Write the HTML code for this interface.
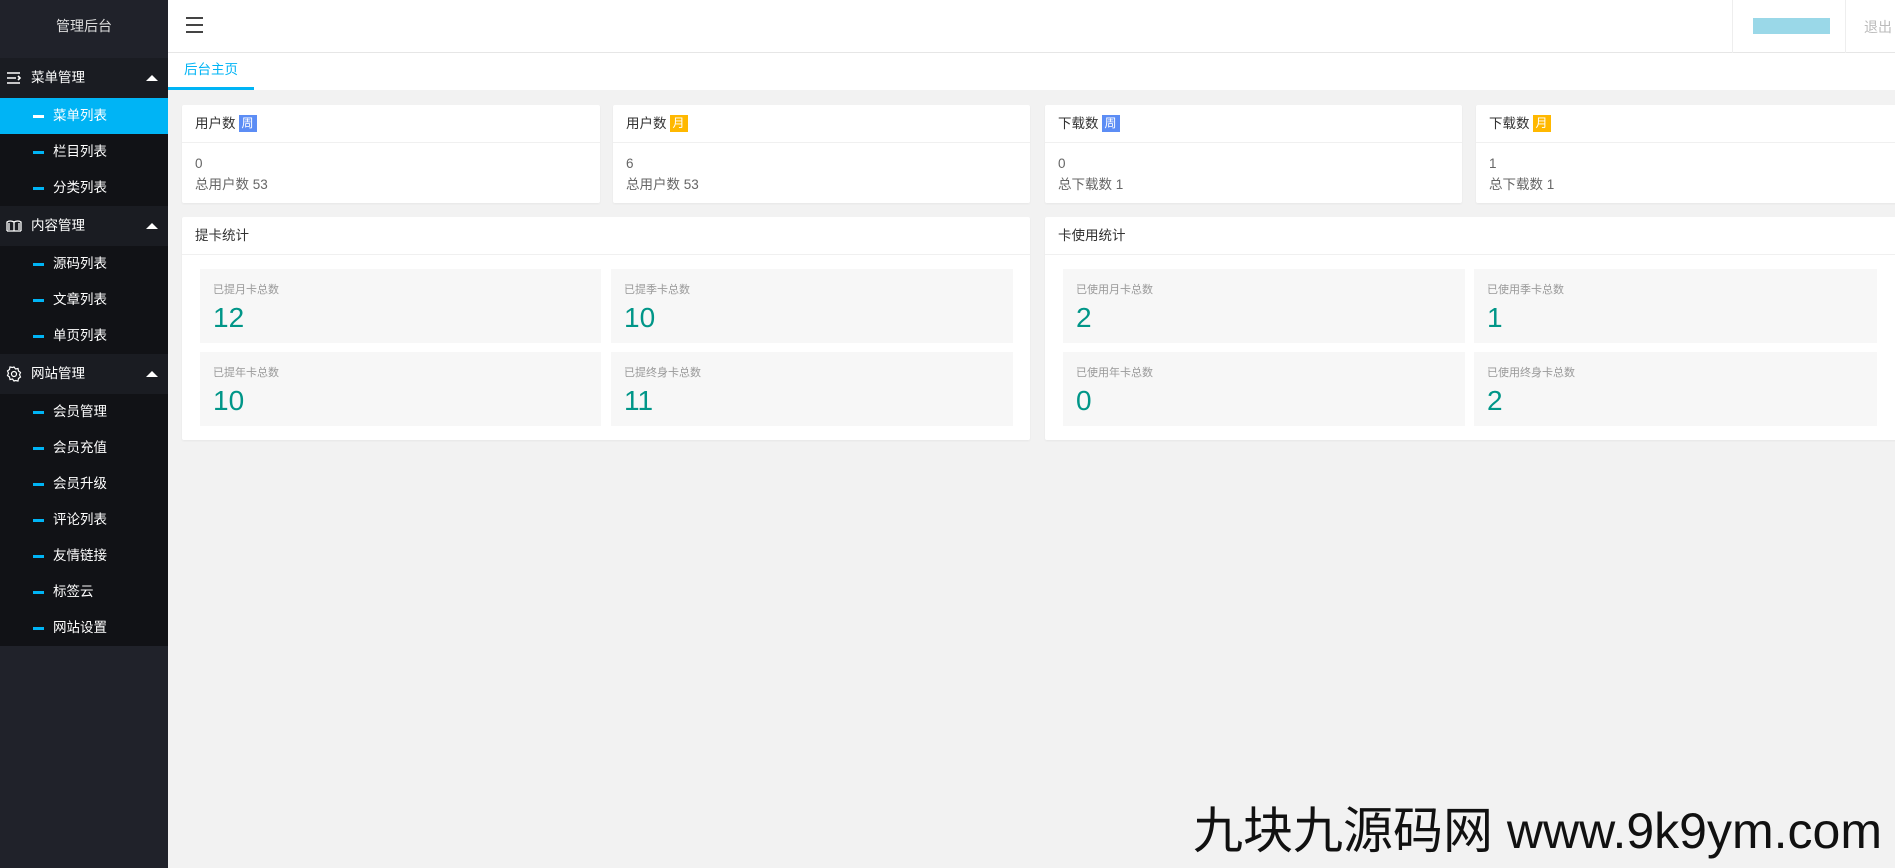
<!DOCTYPE html>
<html><head><meta charset="utf-8"><style>
*{margin:0;padding:0;box-sizing:border-box}
body{width:1895px;height:868px;background:#f2f2f2;font-family:"Liberation Sans","Noto Sans CJK SC",sans-serif;position:relative;overflow:hidden;font-size:14px;color:#333}
.side{position:absolute;left:0;top:0;width:168px;height:868px;background:#20222a}
.logo{height:58px;line-height:52px;text-align:center;color:#ddd;font-size:14px}
.grp{height:40px;background:#1a1c22;color:#fff;position:relative;line-height:40px;padding-left:31px;font-size:13.5px}
.grp .ic{position:absolute;left:6px;top:13px;width:16px;height:14px}
.grp .tri{position:absolute;right:10px;top:17px;width:0;height:0;border-left:6px solid transparent;border-right:6px solid transparent;border-bottom:6px solid #fff}
.sub{height:36px;line-height:36px;background:#111216;color:#fff;padding-left:53px;position:relative;font-size:13.5px}
.sub:before{content:"";position:absolute;left:33px;top:17px;width:11px;height:3px;background:#00b4f5}
.sub.on{background:#00b4f5}
.sub.on:before{background:#fff}
.top{position:absolute;left:168px;top:0;right:0;height:53px;background:#fff;border-bottom:1px solid #e6e6e6}
.tabs{position:absolute;left:168px;top:53px;right:0;height:37px;background:#fff}
.tab{position:absolute;left:0;top:0;width:86px;height:37px;line-height:34px;text-align:center;color:#00b4f5;font-size:13.5px;border-bottom:3px solid #00b4f5}
.card{position:absolute;background:#fff;border-radius:2px;box-shadow:0 1px 2px rgba(0,0,0,.05)}
.ch{height:38px;line-height:38px;padding-left:13px;border-bottom:1px solid #f0f0f0;font-size:13.5px;color:#333}
.badge{display:inline-block;color:#fff;font-size:12px;line-height:17px;padding:0 3px;margin-left:3px;vertical-align:1px}
.b1{background:#5c8df5}.b2{background:#ffb800}
.cb{padding:10px 13px;color:#666;font-size:13.5px;line-height:21px}
.box{position:absolute;background:#f7f7f7;height:74px}
.box .l{position:absolute;left:13px;top:12px;font-size:11px;color:#999}
.box .n{position:absolute;left:13px;top:34px;font-size:28px;color:#009688;line-height:30px}
</style></head><body>
<div class="side">
<div class="logo">管理后台</div>
<div class="grp"><svg class="ic" viewBox="0 0 16 14"><path d="M1 2h13M1 7h9M1 12h13M12 5l2 2-2 2" stroke="#fff" stroke-width="1.6" fill="none"/></svg>菜单管理<span class="tri"></span></div>
<div class="sub on">菜单列表</div><div class="sub">栏目列表</div><div class="sub">分类列表</div>
<div class="grp"><svg class="ic" viewBox="0 0 16 14"><path d="M1 12V3q3-2 7 0q4-2 7 0v9M8 3v9M1 12h14M3 11V4M13 11V4" stroke="#fff" stroke-width="1.3" fill="none"/></svg>内容管理<span class="tri"></span></div>
<div class="sub">源码列表</div><div class="sub">文章列表</div><div class="sub">单页列表</div>
<div class="grp"><svg class="ic" viewBox="0 0 16 16" style="height:16px;top:12px"><circle cx="8" cy="8" r="2.5" stroke="#fff" fill="none" stroke-width="1.2"/><path d="M8 1l1.5 2 2.5-.5.5 2.5 2 1.5-1 2.3 1 2.2-2 1.5-.5 2.5-2.5-.5L8 15l-1.5-2-2.5.5-.5-2.5-2-1.5 1-2.2-1-2.3 2-1.5.5-2.5 2.5.5z" stroke="#fff" fill="none" stroke-width="1.2"/></svg>网站管理<span class="tri"></span></div>
<div class="sub">会员管理</div><div class="sub">会员充值</div><div class="sub">会员升级</div><div class="sub">评论列表</div><div class="sub">友情链接</div><div class="sub">标签云</div><div class="sub">网站设置</div>
</div>
<div class="top">
<div style="position:absolute;left:18px;top:17px;width:17px"><div style="height:2px;background:#444;margin-bottom:5px"></div><div style="height:2px;background:#444;margin-bottom:5px"></div><div style="height:2px;background:#444"></div></div>
<div style="position:absolute;left:1564px;top:0;width:1px;height:53px;background:#eee"></div>
<div style="position:absolute;left:1585px;top:18px;width:77px;height:16px;background:#9ad8e8"></div>
<div style="position:absolute;left:1677px;top:0;width:1px;height:53px;background:#eee"></div>
<div style="position:absolute;left:1696px;top:17px;color:#bbb;font-size:14px">退出</div>
</div>
<div class="tabs"><div class="tab">后台主页</div></div>

<div class="card" style="left:182px;top:105px;width:418px;height:98px"><div class="ch">用户数<span class="badge b1">周</span></div><div class="cb">0<br>总用户数 53</div></div>
<div class="card" style="left:613px;top:105px;width:417px;height:98px"><div class="ch">用户数<span class="badge b2">月</span></div><div class="cb">6<br>总用户数 53</div></div>
<div class="card" style="left:1045px;top:105px;width:417px;height:98px"><div class="ch">下载数<span class="badge b1">周</span></div><div class="cb">0<br>总下载数 1</div></div>
<div class="card" style="left:1476px;top:105px;width:430px;height:98px"><div class="ch">下载数<span class="badge b2">月</span></div><div class="cb">1<br>总下载数 1</div></div>

<div class="card" style="left:182px;top:217px;width:848px;height:223px"><div class="ch">提卡统计</div></div>
<div class="box" style="left:200px;top:269px;width:401px"><span class="l">已提月卡总数</span><span class="n">12</span></div>
<div class="box" style="left:611px;top:269px;width:402px"><span class="l">已提季卡总数</span><span class="n">10</span></div>
<div class="box" style="left:200px;top:352px;width:401px"><span class="l">已提年卡总数</span><span class="n">10</span></div>
<div class="box" style="left:611px;top:352px;width:402px"><span class="l">已提终身卡总数</span><span class="n">11</span></div>

<div class="card" style="left:1045px;top:217px;width:870px;height:223px"><div class="ch">卡使用统计</div></div>
<div class="box" style="left:1063px;top:269px;width:402px"><span class="l">已使用月卡总数</span><span class="n">2</span></div>
<div class="box" style="left:1474px;top:269px;width:403px"><span class="l">已使用季卡总数</span><span class="n">1</span></div>
<div class="box" style="left:1063px;top:352px;width:402px"><span class="l">已使用年卡总数</span><span class="n">0</span></div>
<div class="box" style="left:1474px;top:352px;width:403px"><span class="l">已使用终身卡总数</span><span class="n">2</span></div>

<div style="position:absolute;left:1193px;top:801px;font-size:50px;line-height:60px;color:#111;white-space:nowrap">九块九源码网 www.9k9ym.com</div>
</body></html>
